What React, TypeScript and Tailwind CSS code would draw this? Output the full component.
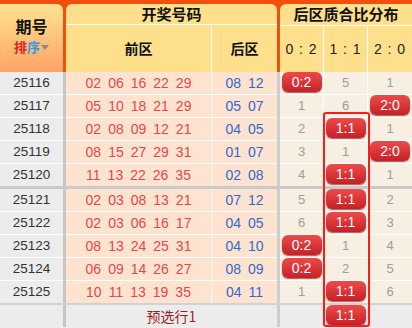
import React from "react";

type Row = { id: string; front: string[]; back: string[]; cells: (string | number)[] };

const rows: Row[] = [
  { id: "25116", front: ["02", "06", "16", "22", "29"], back: ["08", "12"], cells: ["0:2", 5, 1] },
  { id: "25117", front: ["05", "10", "18", "21", "29"], back: ["05", "07"], cells: [1, 6, "2:0"] },
  { id: "25118", front: ["02", "08", "09", "12", "21"], back: ["04", "05"], cells: [2, "1:1", 1] },
  { id: "25119", front: ["08", "15", "27", "29", "31"], back: ["01", "07"], cells: [3, 1, "2:0"] },
  { id: "25120", front: ["11", "13", "22", "26", "35"], back: ["02", "08"], cells: [4, "1:1", 1] },
  { id: "25121", front: ["02", "03", "08", "13", "21"], back: ["07", "12"], cells: [5, "1:1", 2] },
  { id: "25122", front: ["02", "03", "06", "16", "17"], back: ["04", "05"], cells: [6, "1:1", 3] },
  { id: "25123", front: ["08", "13", "24", "25", "31"], back: ["04", "10"], cells: ["0:2", 1, 4] },
  { id: "25124", front: ["06", "09", "14", "26", "27"], back: ["08", "09"], cells: ["0:2", 2, 5] },
  { id: "25125", front: ["10", "11", "13", "19", "35"], back: ["04", "11"], cells: [1, "1:1", 6] },
];

const num = { fontFamily: '"Liberation Sans", Arial, sans-serif' };
const cjk = { fontFamily: '"Noto Sans CJK SC", "Liberation Sans", sans-serif' };

function rowBorder(i: number) {
  if (i === 4) return "h-[25px] border-b-[3px] border-[#c9c9c9]";
  if (i === 9) return "h-[22px]";
  return "h-[23px] border-b border-white";
}

function Badge({ text }: { text: string }) {
  return (
    <div
      className="w-[40px] h-[20px] -mt-[2px] rounded-[6px] bg-gradient-to-b from-[#ec4a4a] to-[#c61f27] shadow-[0_1px_1px_rgba(120,0,0,0.6)] text-white text-[14px] leading-[20px] text-center"
      style={num}
    >
      {text}
    </div>
  );
}

export default function App() {
  return (
    <div className="relative w-[412px] h-[328px] overflow-hidden bg-[#ececec]">
      {/* header */}
      <div className="flex h-[72px] bg-[#f24e0c] pt-[4px] gap-[3px]">
        <div className="w-[63px] rounded-tr-[6px] bg-gradient-to-b from-[#fee391] to-[#ffa366] flex flex-col items-center justify-center pb-[4px]">
          <div className="text-[16px] font-bold text-[#111] leading-[20px]" style={cjk}>
            期号
          </div>
          <div className="flex items-center text-[13px] font-bold leading-[18px] mt-[2px]" style={cjk}>
            <span className="text-[#e0201e]">排</span>
            <span className="text-[#2d9be9]">序</span>
            <span className="ml-[1px] w-0 h-0 border-l-[4px] border-r-[4px] border-t-[5px] border-l-transparent border-r-transparent border-t-[#8a8a8a]" />
          </div>
        </div>
        <div className="w-[211px] rounded-t-[6px] bg-[#fee08c] flex flex-col">
          <div className="h-[21px] border-b border-white flex items-center justify-center text-[15px] font-bold text-[#111]" style={cjk}>
            开奖号码
          </div>
          <div className="flex-1 flex">
            <div className="w-[146px] border-r border-white flex items-center justify-center text-[14px] font-bold text-[#111]" style={cjk}>
              前区
            </div>
            <div className="flex-1 flex items-center justify-center text-[14px] font-bold text-[#111]" style={cjk}>
              后区
            </div>
          </div>
        </div>
        <div className="flex-1 rounded-tl-[6px] bg-[#fee08c] flex flex-col">
          <div className="h-[22px] border-b border-white flex items-center justify-center text-[15px] font-bold text-[#111]" style={cjk}>
            后区质合比分布
          </div>
          <div className="flex-1 flex">
            {["0 : 2", "1 : 1", "2 : 0"].map((t, i) => (
              <div
                key={t}
                className={`w-[44px] flex items-center justify-center text-[14px] tracking-[1px] text-[#222] whitespace-pre ${i < 2 ? "border-r border-white" : ""}`}
                style={num}
              >
                {t}
              </div>
            ))}
          </div>
        </div>
      </div>

      {/* body */}
      <div className="flex">
        <div className="w-[63px] bg-[#ececec]">
          {rows.map((r, i) => (
            <div key={r.id} className={`${rowBorder(i)} flex items-center justify-center text-[13.5px] text-[#333]`} style={num}>
              {r.id}
            </div>
          ))}
        </div>
        <div className="w-[3px] bg-[#c6c6c6]" />
        <div className="w-[211px] bg-[#fee4d0]">
          {rows.map((r, i) => (
            <div key={r.id} className={`${rowBorder(i)} flex`}>
              <div className="w-[146px] border-r border-white flex items-center justify-center gap-[7px] text-[14px] text-[#e8474b]" style={num}>
                {r.front.map((n, k) => (
                  <span key={k}>{n}</span>
                ))}
              </div>
              <div className="flex-1 flex items-center justify-center gap-[7px] text-[14px] text-[#3467cc]" style={num}>
                {r.back.map((n, k) => (
                  <span key={k}>{n}</span>
                ))}
              </div>
            </div>
          ))}
        </div>
        <div className="w-[3px] bg-[#cdcdcd]" />
        <div className="flex-1 bg-[#f6efe2]">
          {rows.map((r, i) => (
            <div key={r.id} className={`${rowBorder(i)} flex`}>
              {r.cells.map((c, k) => (
                <div
                  key={k}
                  className={`w-[44px] flex items-center justify-center text-[13px] text-[#9d9d9d] ${k < 2 ? "border-r border-white" : ""}`}
                  style={num}
                >
                  {typeof c === "string" ? <Badge text={c} /> : c}
                </div>
              ))}
            </div>
          ))}
        </div>
      </div>

      {/* footer */}
      <div className="flex h-[24px] border-t-2 border-[#d2d2d2] bg-[#ececec]">
        <div className="w-[63px]" />
        <div className="w-[3px] bg-[#c6c6c6]" />
        <div className="w-[211px] flex items-center justify-center text-[14px] text-[#a01d1d]" style={cjk}>
          预选行1
        </div>
        <div className="w-[3px] bg-[#cdcdcd]" />
        <div className="flex-1 flex">
          <div className="w-[44px] border-r border-[#e2e2e2]" />
          <div className="w-[44px] border-r border-[#e2e2e2] flex items-center justify-center">
            <Badge text="1:1" />
          </div>
          <div className="w-[44px]" />
        </div>
      </div>

      {/* highlight box */}
      <div className="absolute left-[323px] top-[112px] w-[47px] h-[215px] border-2 border-[#ff1a1a] rounded-[3px] pointer-events-none" />
    </div>
  );
}
